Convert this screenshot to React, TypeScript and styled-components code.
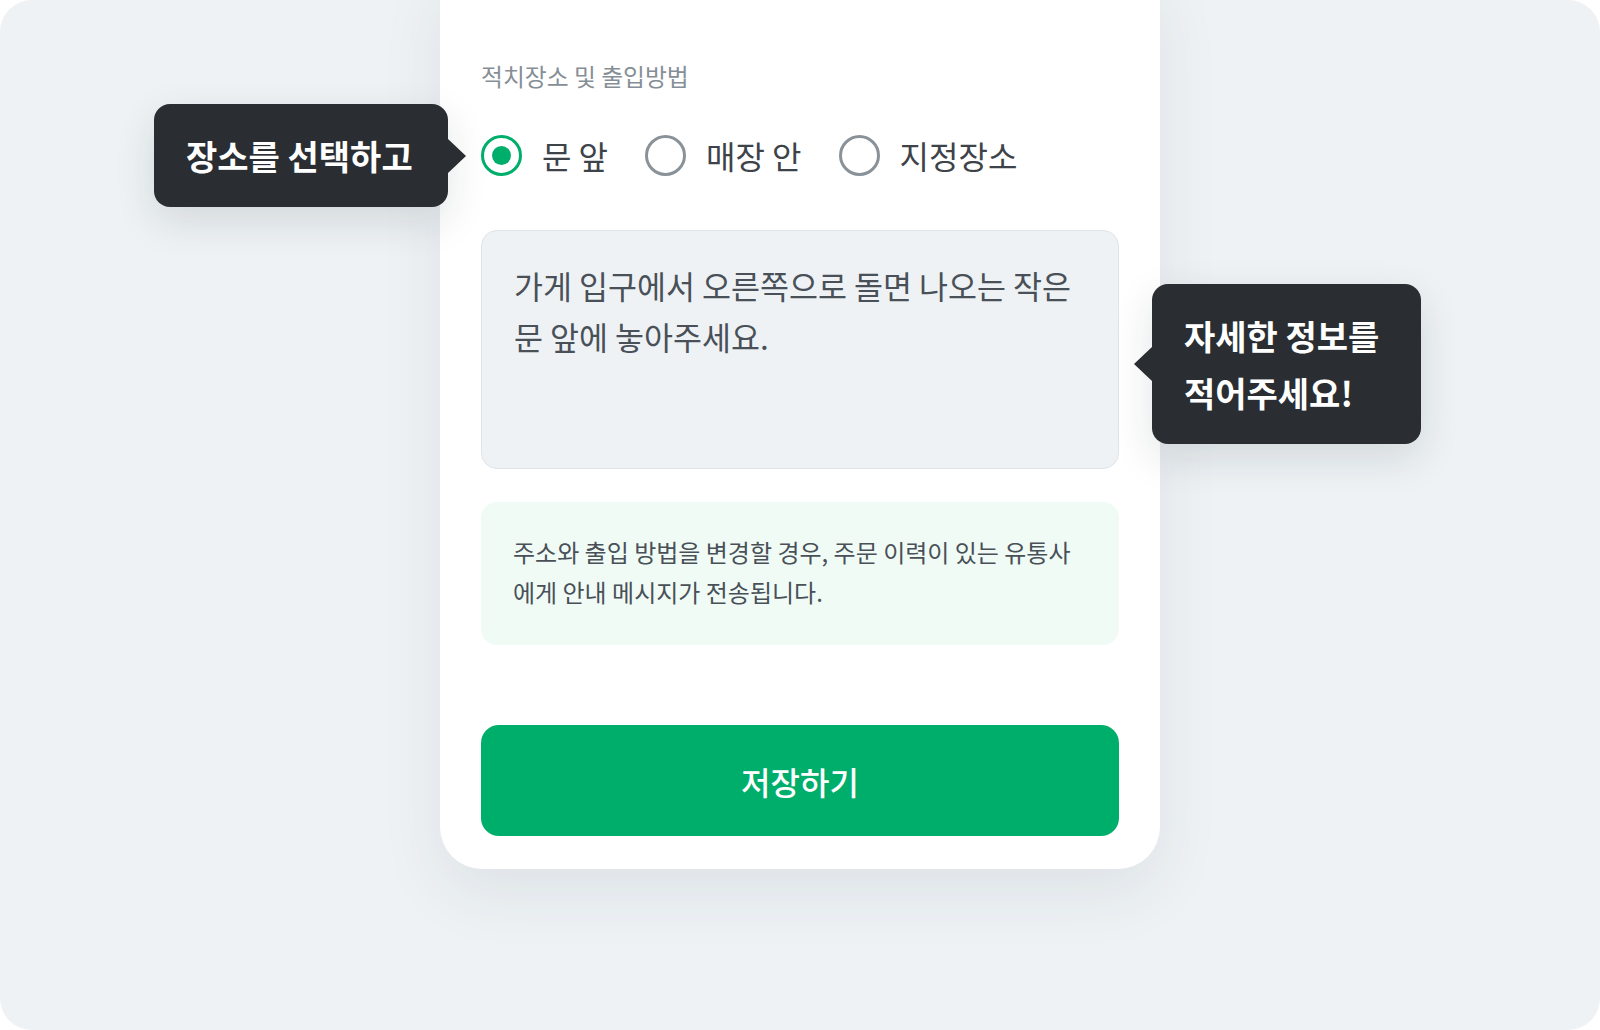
import React, { useState } from 'react';
import styled, { createGlobalStyle } from 'styled-components';

const GlobalStyle = createGlobalStyle`
  html, body {
    margin: 0;
    padding: 0;
    background: #ffffff;
  }
  body {
    font-family: "Noto Sans CJK KR", "Noto Sans", sans-serif;
    -webkit-font-smoothing: antialiased;
  }
  * {
    box-sizing: border-box;
  }
`;

const Frame = styled.div`
  width: 1600px;
  height: 1030px;
  border-radius: 32px;
  background: #eef2f5;
  overflow: hidden;
  display: flex;
  justify-content: center;
  align-items: flex-start;
`;

const Card = styled.div`
  width: 720px;
  margin-top: -40px;
  padding: 99px 41px 33px;
  background: #ffffff;
  border-radius: 42px;
  box-shadow: 0 24px 64px rgba(40, 52, 70, 0.08);
  display: flex;
  flex-direction: column;
`;

const Label = styled.div`
  font-size: 23.8px;
  line-height: 34px;
  color: #868e96;
`;

const RadioRow = styled.div`
  position: relative;
  margin-top: 39px;
  height: 46px;
  display: flex;
  align-items: center;
  gap: 37px;
`;

const RadioItem = styled.label`
  display: flex;
  align-items: center;
  gap: 20px;
  cursor: pointer;
`;

const Ring = styled.span<{ $checked: boolean }>`
  width: 41px;
  height: 41px;
  border-radius: 50%;
  border: 3px solid ${p => (p.$checked ? '#00ae6b' : '#8a9299')};
  display: flex;
  align-items: center;
  justify-content: center;
  &::after {
    content: '';
    width: 19px;
    height: 19px;
    border-radius: 50%;
    background: ${p => (p.$checked ? '#00ae6b' : 'transparent')};
  }
`;

const RadioText = styled.span`
  font-size: 32px;
  line-height: 46px;
  color: #3d4349;
`;

const MemoWrap = styled.div`
  position: relative;
  margin-top: 52px;
`;

const Memo = styled.div`
  height: 239px;
  padding: 29px 32px;
  background: #eef2f5;
  border: 1px solid #dfe4e9;
  border-radius: 16px;
  font-size: 31.5px;
  line-height: 51px;
  color: #495057;
`;

const Notice = styled.div`
  margin-top: 33px;
  height: 143px;
  padding: 30px 32px;
  background: #f0fbf6;
  border-radius: 16px;
  font-size: 24px;
  line-height: 40px;
  color: #495057;
`;

const SaveButton = styled.button`
  margin-top: 80px;
  height: 111px;
  width: 100%;
  border: none;
  border-radius: 18px;
  background: #00ae6b;
  color: #ffffff;
  font-family: "Noto Sans CJK KR", "Noto Sans", sans-serif;
  font-size: 32px;
  font-weight: 500;
  cursor: pointer;
`;

const Tip = styled.div<{ $side: 'left' | 'right' }>`
  position: absolute;
  background: #2a2e33;
  color: #ffffff;
  border-radius: 16px;
  font-size: 34px;
  font-weight: 700;
  line-height: 57px;
  white-space: nowrap;
  box-shadow: 0 14px 40px rgba(20, 30, 40, 0.12);
  &::after {
    content: '';
    position: absolute;
    top: 50%;
    margin-top: -17px;
    border-top: 17px solid transparent;
    border-bottom: 17px solid transparent;
    ${p =>
      p.$side === 'right'
        ? 'left: 100%; border-left: 18px solid #2a2e33;'
        : 'right: 100%; border-right: 18px solid #2a2e33;'}
  }
`;

const PlaceTip = styled(Tip)`
  left: -327px;
  top: -28px;
  width: 294px;
  height: 103px;
  padding: 23px 0 0 32px;
`;

const DetailTip = styled(Tip)`
  left: 671px;
  top: 54px;
  width: 269px;
  height: 160px;
  padding: 23px 0 0 32px;
`;

const options = ['문 앞', '매장 안', '지정장소'];

export default function App() {
  const [selected, setSelected] = useState(0);

  return (
    <>
      <GlobalStyle />
      <Frame>
        <Card>
          <Label>적치장소 및 출입방법</Label>
          <RadioRow>
            <PlaceTip $side="right">장소를 선택하고</PlaceTip>
            {options.map((o, i) => (
              <RadioItem key={o} onClick={() => setSelected(i)}>
                <Ring $checked={selected === i} />
                <RadioText>{o}</RadioText>
              </RadioItem>
            ))}
          </RadioRow>
          <MemoWrap>
            <Memo>가게 입구에서 오른쪽으로 돌면 나오는 작은 문 앞에 놓아주세요.</Memo>
            <DetailTip $side="left">
              자세한 정보를
              <br />
              적어주세요!
            </DetailTip>
          </MemoWrap>
          <Notice>
            주소와 출입 방법을 변경할 경우, 주문 이력이 있는 유통사에게 안내 메시지가 전송됩니다.
          </Notice>
          <SaveButton>저장하기</SaveButton>
        </Card>
      </Frame>
    </>
  );
}
